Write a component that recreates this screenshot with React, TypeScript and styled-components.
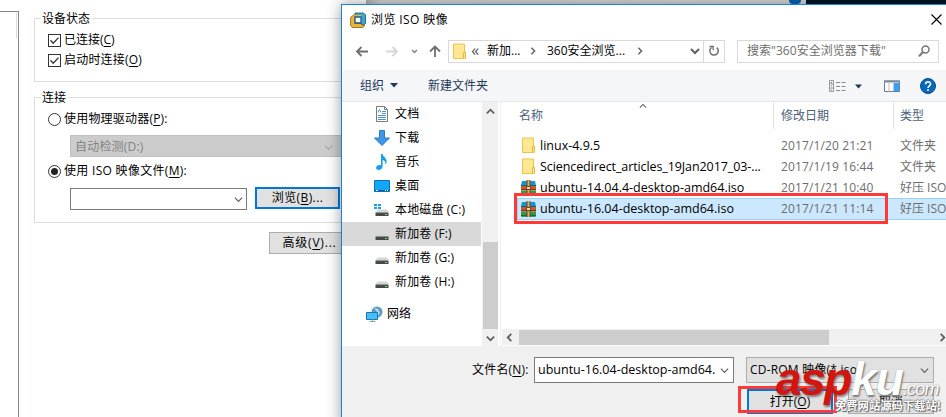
import React from 'react';
import styled, { createGlobalStyle, css } from 'styled-components';

const Global = createGlobalStyle`
  * { box-sizing: border-box; }
  body { margin: 0; background: #fff; overflow: hidden; }
  svg { display: block; flex: none; }
`;

const Screen = styled.div`
  position: relative;
  width: 946px;
  height: 417px;
  overflow: hidden;
  background: #fff;
  color: #000;
  font: 12px/16px "Open Sans", "Noto Sans CJK SC", sans-serif;
  white-space: nowrap;
`;

const Text = styled.span<{ $size?: number; $ls?: number; $color?: string }>`
  font-size: ${p => p.$size ?? 12}px;
  letter-spacing: ${p => p.$ls ?? 0}px;
  color: ${p => p.$color ?? 'inherit'};
  line-height: 16px;
  white-space: pre;
`;

const Key = styled.u`
  text-underline-offset: 2px;
  text-decoration-thickness: 1px;
`;

/* ---------- settings window ---------- */
const Settings = styled.div`
  display: flex;
  width: 370px;
  height: 417px;
`;
const DeviceList = styled.div`
  width: 19px;
  margin-top: 11px;
  border-top: 1px solid #828790;
  border-right: 1px solid #828790;
`;
const ListHeaderEdge = styled.div`
  width: 17px;
  height: 25px;
  margin-top: 1px;
  border-right: 1px solid #dcdcdc;
`;
const Options = styled.div`
  display: flex;
  flex-direction: column;
  width: 336px;
  margin-left: 15px;
  padding-top: 18px;
`;
const Group = styled.div<{ $h: number; $gap: number }>`
  height: ${p => p.$h}px;
  margin-bottom: ${p => p.$gap}px;
  padding-left: 13px;
  border: 1px solid #dcdcdc;
`;
const Legend = styled.div`
  width: fit-content;
  height: 16px;
  margin: -8px 0 0 -7px;
  padding: 0 2px 0 1px;
  background: #fff;
`;
const Choice = styled.div<{ $h: number }>`
  display: flex;
  align-items: center;
  gap: 3px;
  height: ${p => p.$h}px;
`;
const DisabledSelect = styled.div`
  display: flex;
  align-items: center;
  justify-content: space-between;
  width: 275px;
  height: 22px;
  margin: 3px 0 3px 22px;
  padding: 2px 11px 0 4px;
  border: 1px solid #bfbfbf;
  background: #ccc;
  color: #838383;
`;
const BrowseRow = styled.div`
  display: flex;
  gap: 8px;
  margin: 5px 0 0 22px;
`;
const EmptySelect = styled.div`
  display: flex;
  align-items: center;
  justify-content: flex-end;
  width: 177px;
  height: 22px;
  margin-top: 1px;
  padding-right: 3px;
  border: 1px solid #7a7a7a;
`;
const Button = styled.div<{ $w: number; $h: number; $focus?: boolean }>`
  display: flex;
  align-items: center;
  justify-content: center;
  width: ${p => p.$w}px;
  height: ${p => p.$h}px;
  border: ${p => (p.$focus ? '2px solid #0078d7' : '1px solid #adadad')};
  background: #e1e1e1;
`;
const AdvancedRow = styled.div`
  padding-left: 235px;
`;

/* ---------- strip of windows behind the dialog ---------- */
const Behind = styled.div`
  position: absolute;
  top: 0;
  left: 366px;
  display: flex;
  width: 580px;
  height: 5px;
  background: linear-gradient(90deg, #b4b4b4, #d6d6d6 14px, #dcdcdc);
`;
const BehindIcon = styled.div`
  width: 12px;
  height: 4px;
  margin-left: 423px;
  border-radius: 0 0 6px 6px;
  background: #0063b8;
`;
const BehindDark = styled.div`
  width: 142px;
  margin-left: 5px;
  background: #001426;
`;

/* ---------- file dialog ---------- */
const Dialog = styled.div`
  position: absolute;
  top: 4px;
  left: 341px;
  display: flex;
  flex-direction: column;
  width: 615px;
  height: 423px;
  border: 1px solid #1883d7;
  background: #fff;
  box-shadow: 0 0 14px rgba(0, 0, 0, 0.4);
`;
const TitleBar = styled.div`
  display: flex;
  align-items: center;
  gap: 5px;
  width: 604px;
  height: 29px;
  padding: 0 4px 0 8px;
`;
const Spacer = styled.div`
  flex: 1;
`;
const NavBar = styled.div`
  display: flex;
  align-items: center;
  width: 604px;
  height: 36px;
  padding: 0 7px 2px 12px;
`;
const NavIcons = styled.div`
  width: 94px;
`;
const Address = styled.div`
  display: flex;
  align-items: center;
  width: 277px;
  height: 23px;
  border: 1px solid #d9d9d9;
  padding-left: 2px;
`;
const Crumb = styled.div<{ $w: number }>`
  flex: none;
  width: ${p => p.$w}px;
`;
const Refresh = styled.div`
  display: flex;
  align-items: center;
  justify-content: center;
  width: 21px;
  height: 21px;
  margin-left: auto;
  border-left: 1px solid #d9d9d9;
`;
const Search = styled.div`
  display: flex;
  align-items: center;
  justify-content: space-between;
  width: 202px;
  height: 23px;
  margin-left: 12px;
  padding: 0 8px 0 9px;
  border: 1px solid #d9d9d9;
  color: #6d6d6d;
`;
const Toolbar = styled.div`
  display: flex;
  align-items: center;
  height: 32px;
  padding: 0 18px;
  border-bottom: 1px solid #e8e9ea;
  background: #f5f6f7;
  color: #1e395b;
`;
const Body = styled.div`
  display: flex;
  height: 244px;
`;
const Tree = styled.div`
  flex: none;
  width: 139px;
`;
const TreeItem = styled.div<{ $active?: boolean; $root?: boolean }>`
  display: flex;
  align-items: center;
  gap: ${p => (p.$root ? 4 : 5)}px;
  height: 24px;
  padding-left: ${p => (p.$root ? 24 : 32)}px;
  margin-top: ${p => (p.$root ? 8 : 0)}px;
  background: ${p => (p.$active ? '#d9d9d9' : 'transparent')};
`;
const VScroll = styled.div`
  display: flex;
  flex: none;
  flex-direction: column;
  align-items: center;
  width: 16px;
  padding-top: 5px;
  margin-left: 1px;
  background: #f0f0f0;
`;
const VThumb = styled.div`
  width: 15px;
  height: 87px;
  margin: 126px 0 5px;
  background: #cdcdcd;
`;
const Files = styled.div`
  display: flex;
  flex: none;
  flex-direction: column;
  width: 460px;
  margin-left: 2px;
  border-left: 1px solid #f0f0f0;
`;
const Columns = styled.div`
  display: flex;
  height: 27px;
  margin-bottom: 6px;
  color: #4c607a;
`;
const Column = styled.div<{ $w: number; $pad: number }>`
  display: flex;
  flex: none;
  align-items: center;
  width: ${p => p.$w}px;
  padding-left: ${p => p.$pad}px;
  border-right: 1px solid #e2e2e2;
`;
const SortMark = styled.div`
  height: 27px;
  padding: 0 0 0 96px;
`;
const FileRow = styled.div<{ $selected?: boolean }>`
  display: flex;
  align-items: center;
  height: ${p => (p.$selected ? 22 : 21)}px;
  margin-left: 16px;
  padding-left: 2px;
  border: 1px solid transparent;
  ${p => p.$selected && css`
    border-color: #99d1ff;
    background: #cce8ff;
  `}
`;
const Cell = styled.div<{ $w: number }>`
  flex: none;
  width: ${p => p.$w}px;
  color: #6d6d6d;
`;
const NameCell = styled.div`
  display: flex;
  flex: none;
  align-items: center;
  width: 261px;
`;
const FileIcon = styled.div`
  width: 20px;
`;
const HScroll = styled.div`
  display: flex;
  align-items: center;
  height: 16px;
  margin: auto 0 1px 1px;
  padding-left: 3px;
  background: #f0f0f0;
`;
const HThumb = styled.div`
  width: 310px;
  height: 15px;
  margin: 0 109px 0 5px;
  background: #cdcdcd;
`;
const Footer = styled.div`
  flex: 1;
  background: #f0f0f0;
  padding-top: 11px;
`;
const FooterRow = styled.div`
  display: flex;
  align-items: center;
  padding-left: 130px;
`;
const NameLabel = styled.div`
  width: 62px;
`;
const NameInput = styled.div`
  display: flex;
  align-items: center;
  justify-content: space-between;
  width: 200px;
  height: 26px;
  padding: 0 4px 0 3px;
  border: 1px solid #7a7a7a;
  background: #fff;
`;
const TypeSelect = styled.div`
  display: flex;
  align-items: center;
  justify-content: space-between;
  width: 188px;
  height: 26px;
  margin-left: 12px;
  padding: 0 4px 0 3px;
  border: 1px solid #adadad;
  background: #e1e1e1;
`;
const Actions = styled.div`
  display: flex;
  gap: 15px;
  padding: 6px 0 0 405px;
`;

/* ---------- annotations over the windows ---------- */
const Highlight = styled.div<{ $x: number; $y: number; $w: number; $h: number }>`
  position: absolute;
  left: ${p => p.$x}px;
  top: ${p => p.$y}px;
  width: ${p => p.$w}px;
  height: ${p => p.$h}px;
  border: 3px solid #ff3838;
`;
const Mark = styled.div`
  position: absolute;
  left: 776px;
  top: 354px;
  display: flex;
  align-items: baseline;
  font: italic bold 46px/50px "Liberation Sans", sans-serif;
`;
const MarkRed = styled.span`
  color: #d3150f;
  letter-spacing: -1.4px;
  text-shadow: 1px 2px 2px rgba(60, 60, 60, 0.6);
`;
const MarkWhite = styled.span`
  color: #fff;
  letter-spacing: -1px;
  text-shadow: 1px 2px 2px #777, 0 0 1px #999;
`;
const MarkDomain = styled.span`
  color: #fff;
  font-size: 18px;
  font-weight: normal;
  letter-spacing: -0.8px;
  text-shadow: 1px 1px 1px #777, 0 0 2px #999;
`;
const MarkLine = styled.div`
  position: absolute;
  left: 835px;
  top: 397px;
  color: #fff;
  font: bold 11.3px/16px "Noto Sans CJK SC", sans-serif;
  text-shadow: 1px 1px 1px #555, -1px 0 1px #888, 0 -1px 1px #999;
`;

/* ---------- icons ---------- */
const Chevron = ({ dir = 'down', size = 9, color = '#606060', w = 1.3 }: { dir?: 'down' | 'up' | 'left' | 'right'; size?: number; color?: string; w?: number }) => {
  const d = { down: 'M1 3l4 4 4-4', up: 'M1 7l4-4 4 4', left: 'M7 1L3 5l4 4', right: 'M3 1l4 4-4 4' }[dir];
  return <svg width={size} height={size} viewBox="0 0 10 10"><path d={d} fill="none" stroke={color} strokeWidth={w} /></svg>;
};
const Check = () => (
  <svg width="13" height="13" viewBox="0 0 13 13"><rect x=".5" y=".5" width="12" height="12" fill="#fff" stroke="#333" /><path d="M2.5 6.3l2.7 2.9 5.3-5.6" fill="none" stroke="#333" strokeWidth="1.3" /></svg>
);
const Radio = ({ on }: { on?: boolean }) => (
  <svg width="13" height="13" viewBox="0 0 13 13"><circle cx="6.5" cy="6.5" r="6" fill="#fff" stroke="#333" />{on && <circle cx="6.5" cy="6.5" r="3.5" fill="#222" />}</svg>
);
const AppIcon = () => (
  <svg width="16" height="16" viewBox="0 0 16 16">
    <path d="M5 1h8.500l2 2v8.500l-2 1.500H5z" fill="#35a8cf" stroke="#15567a" strokeWidth=".8" />
    <path d="M3.500 3H5v8.500h6.500V13H15l-2 2.500H2.500L.6 13.500V5.500z" fill="#f0b433" stroke="#83601c" strokeWidth=".8" />
    <path d="M3.500 3h8v2h-7z" fill="#f0b433" />
    <path d="M5 5h6v6H5z" fill="#fff" stroke="#1c5e85" strokeWidth="1.3" />
  </svg>
);
const Folder = () => (
  <svg width="16" height="17" viewBox="0 0 16 17"><path d="M2.500 1h11v8.500h1v6h-12z" fill="#ffe793" stroke="#ebc44d" /><path d="M12.500 15v-5.500h2V15" fill="#ffe793" stroke="#e6b93d" /></svg>
);
const Archive = () => (
  <svg width="17" height="16" viewBox="0 0 17 16">
    <path d="M2 1h13l1 4.500H1z" fill="#1695cd" /><path d="M1 5h15v1H1z" fill="#0a628f" />
    <path d="M1 6h15v4H1z" fill="#d2562c" /><path d="M1 9h15v1.300H1z" fill="#8b2c14" />
    <path d="M1 10.500h15V14l-1 1.500H2L1 14z" fill="#2f9b46" /><path d="M1 14h15v1.500H1z" fill="#176b2b" />
    <path d="M6.500 0h4v16h-4z" fill="#6e4220" /><path d="M7.500 0h2v16h-2z" fill="#d5ad67" /><path d="M6.500 6.500h4v3h-4z" fill="#f0dcaa" stroke="#6e4220" />
  </svg>
);
const DocIcon = () => (
  <svg width="16" height="16" viewBox="0 0 16 16"><path d="M2.500.5h8l3 3v12h-11z" fill="#fff" stroke="#7b7b7b" /><path d="M10.500.5v3h3" fill="none" stroke="#7b7b7b" /><path d="M4 6.500l1.500-3 1.500 3M8 5.500h4M8 7.500h4M4 9.500h8M4 11.500h8M4 13.500h8" fill="none" stroke="#4f93c4" /></svg>
);
const DownIcon = () => (
  <svg width="16" height="16" viewBox="0 0 16 16"><path d="M5.500.500h5v7.500h5L8 15.500.500 8h5z" fill="#3d97e4" stroke="#2b7dca" /></svg>
);
const MusicIcon = () => (
  <svg width="16" height="16" viewBox="0 0 16 16"><path d="M7 0h1.500c.5 3 5 4 4 8.500-.3 1-.8 1.500-1.300 2 .6-3-.7-4-2.600-4.500v6.500C8.500 15 6.500 16 4.500 16 1 16 1.500 11.500 5 11c.8-.1 1.500 0 2 .2z" fill="#16a0f0" /></svg>
);
const DesktopIcon = () => (
  <svg width="16" height="16" viewBox="0 0 16 16"><path d="M.5 2.500h15v11H.5z" fill="#12a5f8" stroke="#0872b8" /><path d="M1 12h14v1H1z" fill="#0a5c9c" /><path d="M2 12h2v1H2zM11 12h1v1h-1zM13 12h1v1h-1z" fill="#fff" /></svg>
);
const DriveIcon = ({ system }: { system?: boolean }) => (
  <svg width="16" height="16" viewBox="0 0 16 16">
    {system && <path d="M0 2h3v2H0zM4 2h3v2H4zM0 5h3v2H0zM4 5h3v2H4z" fill="#16a0f0" />}
    <path d="M4 7.500h9l1.500 3h-13z" fill="#d5d5d5" /><path d="M1.500 10.500h13V14h-13z" fill="#444a48" /><path d="M11 12h2v1h-2z" fill="#73db78" />
  </svg>
);
const NetworkIcon = () => (
  <svg width="17" height="17" viewBox="0 0 17 17"><circle cx="11" cy="6" r="5.500" fill="#5a9ac5" /><path d="M8 2l4 1 2 4-2 3-1-4z" fill="#b7d9ec" /><path d="M.5 6.500h11v7H.5z" fill="#48bdfb" stroke="#1b75ad" /><path d="M3.500 15.500h6M6.500 13.500v2" stroke="#8ea6b4" /></svg>
);
const NavArrows = () => (
  <svg width="90" height="16" viewBox="0 0 90 16" fill="none" strokeWidth="1.800">
    <path d="M14 8.500H3M7.500 4L3 8.500 7.500 13" stroke="#6f6f6f" />
    <path d="M32 8.500h11M38.500 4l4.500 4.500L38.500 13" stroke="#d5d5d5" />
    <path d="M58 7l2.500 2.500L63 7" stroke="#858585" strokeWidth="1.500" />
    <path d="M81 14V3.500M76 8.500l5-5 5 5" stroke="#6f6f6f" />
  </svg>
);
const RefreshIcon = () => (
  <svg width="12" height="12" viewBox="0 0 12 12"><path d="M3.500 2.500A4.200 4.200 0 1 0 8.700 2.600" fill="none" stroke="#707070" strokeWidth="1.500" /><path d="M1.500 1.500h3.700v3.700" fill="none" stroke="#707070" strokeWidth="1.300" /></svg>
);
const SearchIcon = () => (
  <svg width="12" height="12" viewBox="0 0 12 12" fill="none" stroke="#777"><circle cx="7.500" cy="4.500" r="3.500" strokeWidth="1.500" /><path d="M5 7L1 11.300" strokeWidth="2" /></svg>
);
const Close = () => (
  <svg width="11" height="11" viewBox="0 0 11 11"><path d="M.5.5l10 10M10.500.5l-10 10" stroke="#000" strokeWidth="1.100" /></svg>
);
const Caret = () => <svg width="8" height="5" viewBox="0 0 8 5"><path d="M0 0h8L4 4.500z" fill="#1e395b" /></svg>;
const ToolIcons = () => (
  <svg width="108" height="18" viewBox="0 0 108 18">
    <path d="M.5 3.500h4v11h-4zM.5 7h4M.5 11h4" fill="none" stroke="#999" /><path d="M2 5h1v1H2z" fill="#555" /><path d="M2 8.500h1v1H2z" fill="#26a7e7" /><path d="M2 12.500h1v1H2z" fill="#d15a30" />
    <path d="M7 5.500h4M12.500 5.500h4M7 9.500h4M12.500 9.500h4M7 13.500h4M12.500 13.500h4" stroke="#8c8c8c" />
    <path d="M26 7.500h7l-3.500 4z" fill="#1e395b" />
    <path d="M55.500 4h15v10.500h-15z" fill="#fff" stroke="#6d7c91" /><path d="M55 3.500h16v2H55z" fill="#7b879a" /><path d="M64.500 6h6v8h-6z" fill="#409dea" /><path d="M60 5.500v9" stroke="#b6bdc6" />
    <circle cx="99" cy="9" r="7.500" fill="#0868bb" stroke="#064d91" />
    <path d="M96.600 7.200c0-3.300 5-3.200 4.900-.2 0 1.700-2.500 1.900-2.500 4M99 12.200v1.700" fill="none" stroke="#fff" strokeWidth="1.600" />
  </svg>
);

const tree = [
  { label: '文档', icon: <DocIcon /> },
  { label: '下载', icon: <DownIcon /> },
  { label: '音乐', icon: <MusicIcon /> },
  { label: '桌面', icon: <DesktopIcon /> },
  { label: '本地磁盘 (C:)', icon: <DriveIcon system /> },
  { label: '新加卷 (F:)', icon: <DriveIcon />, active: true },
  { label: '新加卷 (G:)', icon: <DriveIcon /> },
  { label: '新加卷 (H:)', icon: <DriveIcon /> },
];
const files = [
  { name: 'linux-4.9.5', date: '2017/1/20 21:21', type: '文件夹' },
  { name: 'Sciencedirect_articles_19Jan2017_03-...', date: '2017/1/19 16:44', type: '文件夹', ls: -0.09 },
  { name: 'ubuntu-14.04.4-desktop-amd64.iso', date: '2017/1/21 10:40', type: '好压 ISO', iso: true },
  { name: 'ubuntu-16.04-desktop-amd64.iso', date: '2017/1/21 11:14', type: '好压 ISO', iso: true, selected: true },
];

const SettingsWindow = () => (
  <Settings>
    <DeviceList><ListHeaderEdge /></DeviceList>
    <Options>
      <Group $h={64} $gap={15}>
        <Legend><Text>设备状态</Text></Legend>
        <Choice $h={26}><Check /><Text>已连接(<Key>C</Key>)</Text></Choice>
        <Choice $h={14}><Check /><Text $ls={0.2}>启动时连接(<Key>O</Key>)</Text></Choice>
      </Group>
      <Group $h={126} $gap={9}>
        <Legend><Text>连接</Text></Legend>
        <Choice $h={26}><Radio /><Text $ls={0.2}>使用物理驱动器(<Key>P</Key>):</Text></Choice>
        <DisabledSelect><Text $ls={0.2}>自动检测(D:)</Text><Chevron color="#aaa" /></DisabledSelect>
        <Choice $h={22}><Radio on /><Text $ls={0.3}>使用 ISO 映像文件(<Key>M</Key>):</Text></Choice>
        <BrowseRow>
          <EmptySelect><Chevron /></EmptySelect>
          <Button $w={85} $h={22} $focus><Text $ls={0.4}>浏览(<Key>B</Key>)...</Text></Button>
        </BrowseRow>
      </Group>
      <AdvancedRow><Button $w={81} $h={22}><Text $ls={0.8}>高级(<Key>V</Key>)...</Text></Button></AdvancedRow>
    </Options>
  </Settings>
);

const FileDialog = () => (
  <Dialog>
    <TitleBar><AppIcon /><Text $ls={0.4}>浏览 ISO 映像</Text><Spacer /><Close /></TitleBar>
    <NavBar>
      <NavIcons><NavArrows /></NavIcons>
      <Address>
        <Folder />
        <Crumb $w={20}><Text $size={16} $color="#555"> «</Text></Crumb>
        <Crumb $w={42}><Text>新加...</Text></Crumb>
        <Crumb $w={18}><Chevron dir="right" size={8} w={1.8} /></Crumb>
        <Crumb $w={89}><Text>360安全浏览...</Text></Crumb>
        <Crumb $w={54}><Chevron dir="right" size={8} w={1.8} /></Crumb>
        <Chevron size={10} w={2} />
        <Refresh><RefreshIcon /></Refresh>
      </Address>
      <Search><Text $ls={0.05}>搜索"360安全浏览器下载"</Text><SearchIcon /></Search>
    </NavBar>
    <Toolbar>
      <Crumb $w={30}><Text>组织</Text></Crumb><Crumb $w={38}><Caret /></Crumb>
      <Crumb $w={401}><Text>新建文件夹</Text></Crumb>
      <ToolIcons />
    </Toolbar>
    <Body>
      <Tree>
        {tree.map(t => <TreeItem key={t.label} $active={t.active}>{t.icon}<Text $ls={0.15}>{t.label}</Text></TreeItem>)}
        <TreeItem $root><NetworkIcon /><Text>网络</Text></TreeItem>
      </Tree>
      <VScroll><Chevron dir="up" w={2} /><VThumb /><Chevron w={2} /></VScroll>
      <Files>
        <Columns>
          <Column $w={273} $pad={18}><Text>名称</Text><SortMark><Chevron dir="up" size={8} /></SortMark></Column>
          <Column $w={120} $pad={7}><Text>修改日期</Text></Column>
          <Column $w={70} $pad={6}><Text>类型</Text></Column>
        </Columns>
        {files.map(f => (
          <FileRow key={f.name} $selected={f.selected}>
            <NameCell><FileIcon>{f.iso ? <Archive /> : <Folder />}</FileIcon><Text $size={12.5} $ls={f.ls}>{f.name}</Text></NameCell>
            <Cell $w={119}><Text $ls={0.13}>{f.date}</Text></Cell>
            <Cell $w={70}><Text>{f.type}</Text></Cell>
          </FileRow>
        ))}
        <HScroll><Chevron dir="left" w={2} /><HThumb /><Chevron dir="right" w={2} /></HScroll>
      </Files>
    </Body>
    <Footer>
      <FooterRow>
        <NameLabel><Text $ls={0.2}>文件名(<Key>N</Key>):</Text></NameLabel>
        <NameInput><Text $size={12.5}>ubuntu-16.04-desktop-amd64.</Text><Chevron /></NameInput>
        <TypeSelect><Text $ls={0.2}>CD-ROM 映像(*.iso</Text><Chevron /></TypeSelect>
      </FooterRow>
      <Actions>
        <Button $w={86} $h={25} $focus><Text>打开(<Key>O</Key>)</Text></Button>
        <Button $w={86} $h={25}><Text>取消</Text></Button>
      </Actions>
    </Footer>
  </Dialog>
);

export default function App() {
  return (
    <Screen>
      <Global />
      <SettingsWindow />
      <Behind><BehindIcon /><BehindDark /></Behind>
      <FileDialog />
      <Highlight $x={514} $y={193} $w={374} $h={31} />
      <Highlight $x={738} $y={386} $w={99} $h={27} />
      <Mark><MarkRed>asp</MarkRed><MarkWhite>ku</MarkWhite><MarkDomain>.com</MarkDomain></Mark>
      <MarkLine>免费网站源码下载站!</MarkLine>
    </Screen>
  );
}
